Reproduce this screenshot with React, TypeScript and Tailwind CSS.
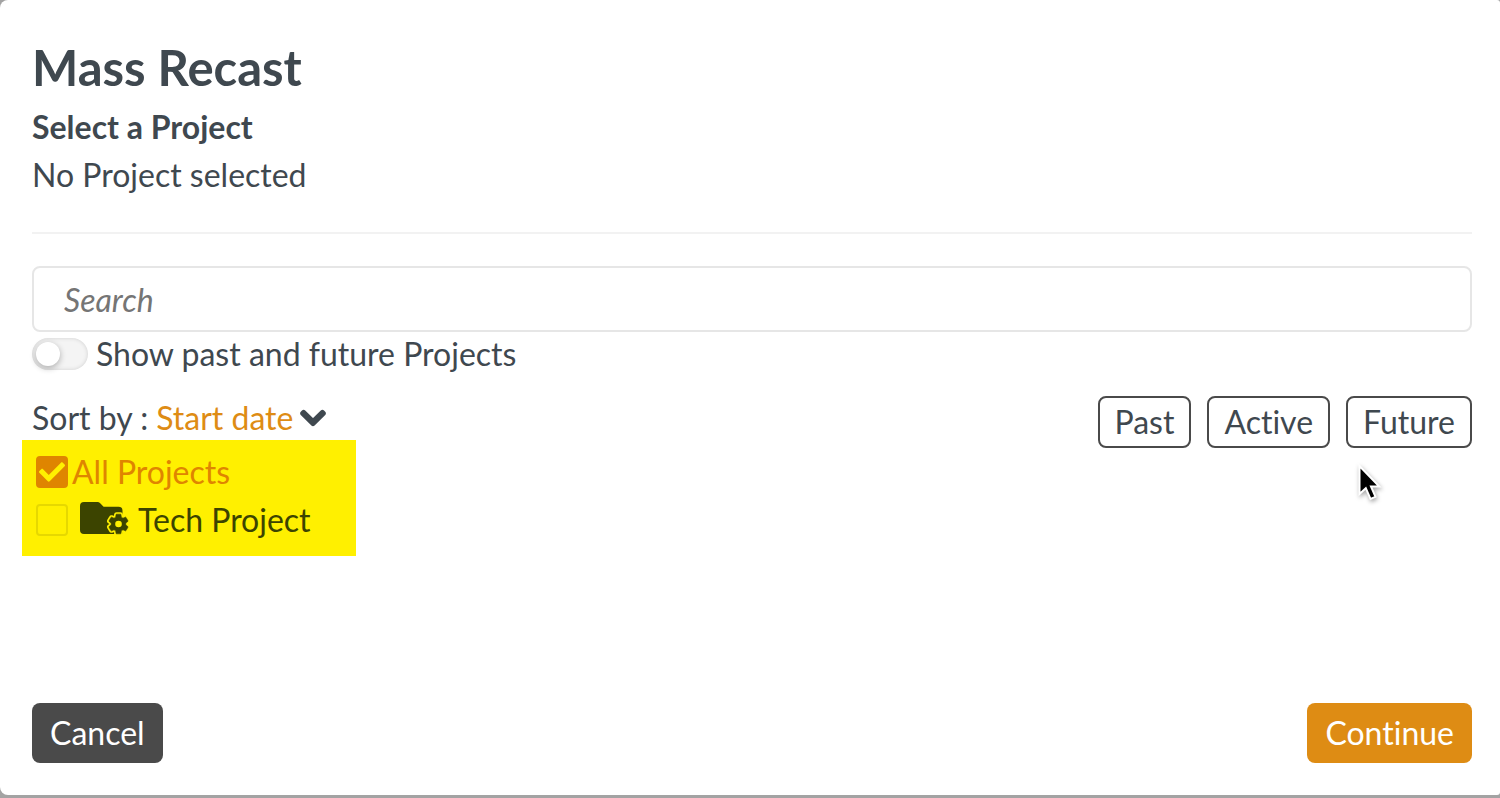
import React, { useState } from "react";
import { FaCheck, FaChevronDown } from "react-icons/fa";

const GEAR =
  "M19.43 12.98c.04-.32.07-.64.07-.98s-.03-.66-.07-.98l2.11-1.65c.19-.15.24-.42.12-.64l-2-3.46c-.12-.22-.39-.3-.61-.22l-2.49 1c-.52-.4-1.08-.73-1.69-.98l-.38-2.65C14.46 2.18 14.25 2 14 2h-4c-.25 0-.46.18-.49.42l-.38 2.65c-.61.25-1.17.59-1.69.98l-2.49-1c-.23-.09-.49 0-.61.22l-2 3.46c-.13.22-.07.49.12.64l2.11 1.65c-.04.32-.07.65-.07.98s.03.66.07.98l-2.11 1.65c-.19.15-.24.42-.12.64l2 3.46c.12.22.39.3.61.22l2.49-1c.52.4 1.08.73 1.69.98l.38 2.65c.03.24.24.42.49.42h4c.25 0 .46-.18.49-.42l.38-2.65c.61-.25 1.17-.59 1.69-.98l2.49 1c.23.09.49 0 .61-.22l2-3.46c.12-.22.07-.49-.12-.64l-2.11-1.65z";

function ProjectFolderIcon() {
  return (
    <svg viewBox="0 0 50 36" className="h-9 w-[50px] shrink-0" aria-hidden="true">
      <path
        d="M4 0H17.5Q19 0 20.2 1.2L23.6 4.8H38.5Q42.5 4.8 42.5 8.8V32H4Q0 32 0 28V4Q0 0 4 0Z"
        fill="#3c4400"
      />
      <g transform="translate(38.5 22) scale(0.98) translate(-12 -12)">
        <path d={GEAR} fill="#fff000" stroke="#fff000" strokeWidth="4" strokeLinejoin="round" />
        <path d={GEAR} fill="#3c4400" stroke="#3c4400" strokeWidth="0.6" />
        <circle cx="12" cy="12" r="3.4" fill="#fff000" />
      </g>
    </svg>
  );
}

type ProjectRowProps = {
  id: string;
  label: string;
  checked: boolean;
  onChange: (checked: boolean) => void;
  icon?: React.ReactNode;
};

function ProjectRow({ id, label, checked, onChange, icon }: ProjectRowProps) {
  return (
    <li className="flex h-12 items-center">
      <span className="relative flex size-8 shrink-0">
        <input
          id={id}
          type="checkbox"
          checked={checked}
          onChange={(e) => onChange(e.target.checked)}
          className="size-8 appearance-none rounded-[4px] border-2 border-[#e6d800] checked:border-[#df8500] checked:bg-[#df8500]"
        />
        {checked && (
          <FaCheck className="pointer-events-none absolute top-[3px] left-[3px] text-[#fff000]" size={26} />
        )}
      </span>
      {icon && <span className="mr-2 ml-3 flex">{icon}</span>}
      <label
        htmlFor={id}
        className={icon ? "text-[#3c4400]" : "pl-1 text-[#df8500]"}
      >
        {label}
      </label>
    </li>
  );
}

function Pointer() {
  return (
    <svg
      viewBox="0 0 28 42"
      className="pointer-events-none absolute top-[463px] right-[115px] h-[42px] w-7 drop-shadow-[1px_2px_2px_rgba(0,0,0,0.35)]"
      aria-hidden="true"
    >
      <path
        d="M2.5 3V31L8.8 25.2L13.5 36L18.5 33.8L14 23.6H22.3Z"
        fill="#000"
        stroke="#fff"
        strokeWidth="2"
      />
    </svg>
  );
}

const filters = ["Past", "Active", "Future"];

export default function App() {
  const [showAll, setShowAll] = useState(false);
  const [all, setAll] = useState(true);
  const [tech, setTech] = useState(false);

  return (
    <div className="flex min-h-screen flex-col bg-[#a3a3a3] pb-[3px] font-['Lato',sans-serif] text-[32px] leading-12 text-[#3f484f] [font-variant-ligatures:none]">
      <main className="relative flex flex-1 flex-col rounded-l-lg rounded-r-[3px] bg-white pt-8 pr-7 pb-8 pl-8">
        <header className="border-b-2 border-[#f2f2f2] pb-[33px]">
          <h1 className="text-[49px] leading-[71px] font-bold">Mass Recast</h1>
          <h2 className="font-bold">Select a Project</h2>
          <p>No Project selected</p>
        </header>

        <input
          type="search"
          aria-label="Search"
          placeholder="Search"
          className="mt-8 h-[66px] w-full rounded-lg border-2 border-[#e6e6e6] px-[30px] placeholder:text-[#757575] placeholder:italic"
        />

        <div className="mt-[6px] flex h-8 items-center gap-2">
          <span className="relative flex">
            <input
              id="show-all"
              type="checkbox"
              role="switch"
              checked={showAll}
              onChange={(e) => setShowAll(e.target.checked)}
              className="peer h-8 w-14 appearance-none rounded-full bg-[#f4f4f4] shadow-[inset_0_0_4px_rgba(0,0,0,0.15)] checked:bg-[#de8c14]"
            />
            <span className="pointer-events-none absolute top-1 left-1 size-6 rounded-full bg-white shadow-[0_2px_6px_rgba(0,0,0,0.3)] peer-checked:left-7" />
          </span>
          <label htmlFor="show-all">Show past and future Projects</label>
        </div>

        <div className="mt-[26px] flex items-start justify-between">
          <div>
            <div className="flex h-11 items-center">
              <label htmlFor="sort" className="pr-2">
                Sort by :
              </label>
              <select
                id="sort"
                className="field-sizing-content appearance-none bg-transparent text-[#de8c14]"
              >
                <option>Start date</option>
              </select>
              <FaChevronDown
                size={28}
                className="ml-[6px]"
                stroke="currentColor"
                strokeWidth={36}
                aria-hidden="true"
              />
            </div>
            <ul className="-ml-[10px] w-[334px] bg-[#fff000] pt-2 pb-3 pl-[14px]">
              <ProjectRow id="all-projects" label="All Projects" checked={all} onChange={setAll} />
              <ProjectRow
                id="tech-project"
                label="Tech Project"
                checked={tech}
                onChange={setTech}
                icon={<ProjectFolderIcon />}
              />
            </ul>
          </div>
          <div className="flex gap-4">
            {filters.map((name) => (
              <button
                key={name}
                type="button"
                className="rounded-lg border-2 border-[#4a4a4a] px-[15px]"
              >
                {name}
              </button>
            ))}
          </div>
        </div>

        <footer className="mt-auto flex justify-between text-white">
          <button type="button" className="h-[60px] rounded-lg bg-[#4a4a4a] px-[18px]">
            Cancel
          </button>
          <button type="button" className="h-[60px] rounded-lg bg-[#de8c14] px-[18px]">
            Continue
          </button>
        </footer>
        <Pointer />
      </main>
    </div>
  );
}
